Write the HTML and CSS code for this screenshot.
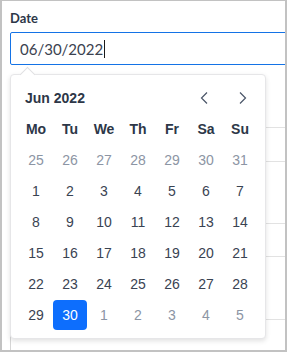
FILE: index.html
```html
<!DOCTYPE html>
<html>
<head>
<meta charset="utf-8">
<link rel="stylesheet" href="styles.css">
</head>
<body>
<div class="frame">
  <div class="field">
    <div class="label">Date</div>
    <div class="input"><span class="value">06/30/2022</span><span class="caret"></span></div>
    <div class="backdrop">
      <div class="brow h32"></div>
      <div class="brow h34"></div>
      <div class="brow h62"></div>
      <div class="brow h33"></div>
      <div class="brow h63"></div>
      <div class="brow last"></div>
    </div>
    <div class="popup">
      <div class="arrow"></div>
      <div class="head">
        <span class="month">Jun 2022</span>
        <div class="navs">
          <button class="nav" aria-label="Previous month"><svg width="10" height="14" viewBox="0 0 10 14"><path d="M8 1.5 L2.5 7 L8 12.5" fill="none" stroke="#4a5568" stroke-width="1.2"/></svg></button>
          <button class="nav" aria-label="Next month"><svg width="10" height="14" viewBox="0 0 10 14"><path d="M2 1.5 L7.5 7 L2 12.5" fill="none" stroke="#4a5568" stroke-width="1.2"/></svg></button>
        </div>
      </div>
      <div class="grid">
        <span class="wd">Mo</span><span class="wd">Tu</span><span class="wd">We</span><span class="wd">Th</span><span class="wd">Fr</span><span class="wd">Sa</span><span class="wd">Su</span>
        <span class="d out">25</span><span class="d out">26</span><span class="d out">27</span><span class="d out">28</span><span class="d out">29</span><span class="d out">30</span><span class="d out">31</span>
        <span class="d">1</span><span class="d">2</span><span class="d">3</span><span class="d">4</span><span class="d">5</span><span class="d">6</span><span class="d">7</span>
        <span class="d">8</span><span class="d">9</span><span class="d">10</span><span class="d">11</span><span class="d">12</span><span class="d">13</span><span class="d">14</span>
        <span class="d">15</span><span class="d">16</span><span class="d">17</span><span class="d">18</span><span class="d">19</span><span class="d">20</span><span class="d">21</span>
        <span class="d">22</span><span class="d">23</span><span class="d">24</span><span class="d">25</span><span class="d">26</span><span class="d">27</span><span class="d">28</span>
        <span class="d">29</span><span class="d"><span class="sel">30</span></span><span class="d out">1</span><span class="d out">2</span><span class="d out">3</span><span class="d out">4</span><span class="d out">5</span>
      </div>
    </div>
  </div>
</div>
</body>
</html>
```
FILE: styles.css
```css
* { box-sizing: border-box; }
html, body { margin: 0; padding: 0; background: #fff; }
.frame {
  width: 287px;
  height: 352px;
  border-style: solid;
  border-color: #c2c2c2;
  border-width: 1px 2px 2px 2px;
  overflow: hidden;
  padding: 9px 0 0 8px;
  font-family: "Liberation Sans", Arial, sans-serif;
}
.field { position: relative; }
.label {
  font-family: Lato, "Liberation Sans", sans-serif;
  font-weight: 700;
  font-size: 13px;
  line-height: 16px;
  color: #2d3748;
}
.input {
  margin-top: 6px;
  width: 320px;
  height: 33px;
  border: 1px solid #1473e6;
  border-radius: 2px;
  padding-left: 9px;
  display: flex;
  align-items: center;
  font-family: Lato, "Liberation Sans", sans-serif;
  font-size: 15px;
  color: #3b4250;
}
.caret {
  display: inline-block;
  width: 1px;
  height: 18px;
  background: #1a1a1a;
  margin-left: 1px;
}
.backdrop {
  margin-top: 31px;
  border-left: 1px solid #d6d6d6;
  width: 290px;
}
.brow { border-bottom: 1px solid #e2e2e2; }
.h32 { height: 32px; }
.h34 { height: 34px; }
.h62 { height: 62px; }
.h33 { height: 33px; }
.h63 { height: 63px; }
.last { height: 40px; border-bottom: none; }
.popup {
  position: absolute;
  left: 0;
  top: 64px;
  width: 256px;
  height: 265px;
  background: #fff;
  border: 1px solid #e6e6e8;
  border-radius: 4px;
  box-shadow: 0 2px 5px rgba(0, 0, 0, 0.12);
  padding: 8px 8px 8px 8px;
}
.arrow {
  position: absolute;
  top: -6px;
  left: 11px;
  width: 11px;
  height: 11px;
  background: #fff;
  border-top: 1px solid #e0e0e2;
  border-left: 1px solid #e0e0e2;
  transform: rotate(45deg);
}
.head {
  height: 30px;
  display: flex;
  align-items: center;
  justify-content: space-between;
  padding-left: 6px;
}
.month {
  font-weight: 700;
  font-size: 14px;
  color: #2d3748;
}
.navs { display: flex; gap: 11px; }
.nav {
  width: 28px;
  height: 28px;
  padding: 0;
  margin: 0;
  border: none;
  background: transparent;
  display: flex;
  align-items: center;
  justify-content: center;
}
.grid {
  display: grid;
  grid-template-columns: repeat(7, 34px);
  grid-auto-rows: 31px;
}
.wd, .d {
  display: flex;
  align-items: center;
  justify-content: center;
  font-size: 14px;
}
.wd { font-weight: 700; color: #2d3748; }
.d { color: #3a4352; }
.d.out { color: #8c95a4; }
.sel {
  width: 34px;
  height: 30px;
  border-radius: 4px;
  background: #0d6efd;
  color: #fff;
  display: flex;
  align-items: center;
  justify-content: center;
}
```
